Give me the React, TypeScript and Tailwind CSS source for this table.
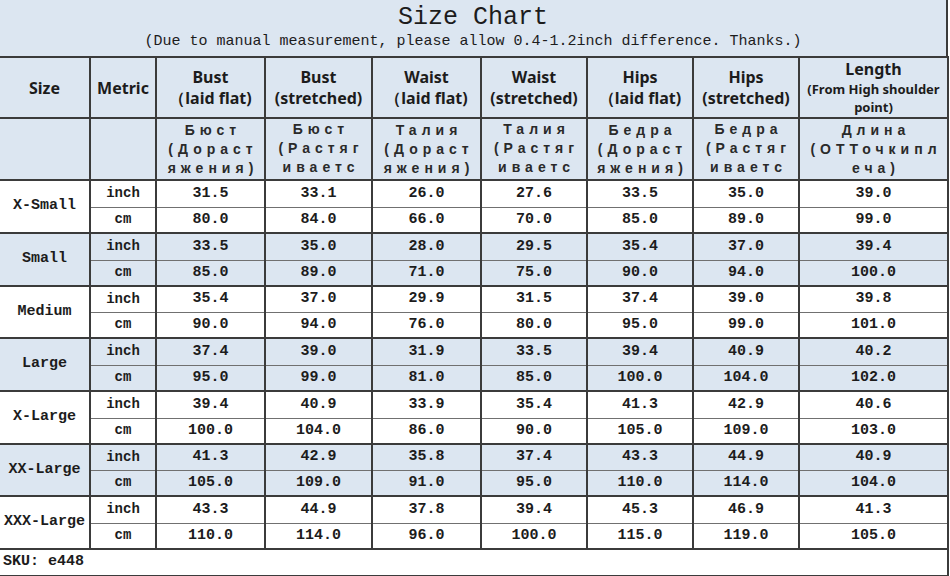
import React from 'react';

const mono = "font-['Liberation_Mono','DejaVu_Sans_Mono',monospace]";
const sans = "font-['Noto_Sans','Liberation_Sans',sans-serif]";

type Group = { size: string; inch: string[]; cm: string[] };

const groups: Group[] = [
  { size: 'X-Small', inch: ['31.5', '33.1', '26.0', '27.6', '33.5', '35.0', '39.0'], cm: ['80.0', '84.0', '66.0', '70.0', '85.0', '89.0', '99.0'] },
  { size: 'Small', inch: ['33.5', '35.0', '28.0', '29.5', '35.4', '37.0', '39.4'], cm: ['85.0', '89.0', '71.0', '75.0', '90.0', '94.0', '100.0'] },
  { size: 'Medium', inch: ['35.4', '37.0', '29.9', '31.5', '37.4', '39.0', '39.8'], cm: ['90.0', '94.0', '76.0', '80.0', '95.0', '99.0', '101.0'] },
  { size: 'Large', inch: ['37.4', '39.0', '31.9', '33.5', '39.4', '40.9', '40.2'], cm: ['95.0', '99.0', '81.0', '85.0', '100.0', '104.0', '102.0'] },
  { size: 'X-Large', inch: ['39.4', '40.9', '33.9', '35.4', '41.3', '42.9', '40.6'], cm: ['100.0', '104.0', '86.0', '90.0', '105.0', '109.0', '103.0'] },
  { size: 'XX-Large', inch: ['41.3', '42.9', '35.8', '37.4', '43.3', '44.9', '40.9'], cm: ['105.0', '109.0', '91.0', '95.0', '110.0', '114.0', '104.0'] },
  { size: 'XXX-Large', inch: ['43.3', '44.9', '37.8', '39.4', '45.3', '46.9', '41.3'], cm: ['110.0', '114.0', '96.0', '100.0', '115.0', '119.0', '105.0'] },
];

const headers: { top: string; sub: string; small?: boolean }[] = [
  { top: 'Bust', sub: '（laid flat)' },
  { top: 'Bust', sub: '(stretched)' },
  { top: 'Waist', sub: '（laid flat)' },
  { top: 'Waist', sub: '(stretched)' },
  { top: 'Hips', sub: '（laid flat)' },
  { top: 'Hips', sub: '(stretched)' },
  { top: 'Length', sub: '(From High shoulder point)', small: true },
];

// stretched cells are cut off after the third line in the source chart
const russian: { lines: string[]; top?: boolean }[] = [
  { lines: ['Бюст', '(Дораст', 'яжения)'] },
  { lines: ['Бюст', '(Растяг', 'иваетс'], top: true },
  { lines: ['Талия', '(Дораст', 'яжения)'] },
  { lines: ['Талия', '(Растяг', 'иваетс'], top: true },
  { lines: ['Бедра', '(Дораст', 'яжения)'] },
  { lines: ['Бедра', '(Растяг', 'иваетс'], top: true },
  { lines: ['Длина', '(ОТТочкипл', 'еча)'] },
];

const widths = [90, 66, 109, 107, 109, 106, 106, 106, 149];

export default function App() {
  return (
    <div className="w-[950px] h-[576px] bg-white overflow-hidden text-[#1c1c1c]">
      <div className="w-[948px]">
        {/* Title */}
        <div className="h-[56px] bg-[#dce6f1] border-r-2 border-[#3b3b3b] flex flex-col items-center pt-[3px]">
          <div className={`${mono} text-[25px] leading-[29px]`}>Size Chart</div>
          <div className={`${mono} text-[15px] leading-[20px]`}>
            (Due to manual measurement, please allow 0.4-1.2inch difference. Thanks.)
          </div>
        </div>

        <table className="table-fixed border-collapse w-[948px]">
          <colgroup>
            {widths.map((w, i) => (
              <col key={i} style={{ width: w }} />
            ))}
          </colgroup>
          <tbody>
            {/* English header */}
            <tr className="h-[61px] bg-[#dce6f1]">
              <td className={`${sans} border-y-2 border-r-2 border-[#3b3b3b] text-center font-bold text-[16px]`}>Size</td>
              <td className={`${sans} border-2 border-[#3b3b3b] text-center font-bold text-[16px]`}>Metric</td>
              {headers.map((h, i) => (
                <td key={i} className={`${sans} border-2 border-[#3b3b3b] text-center font-bold leading-[21px]`}>
                  <div className="text-[16px]">{h.top}</div>
                  <div className={h.small ? 'text-[13px] leading-[18px] px-1' : 'text-[16px]'}>{h.sub}</div>
                </td>
              ))}
            </tr>

            {/* Russian header */}
            <tr className="h-[62px] bg-[#dce6f1]">
              <td className="border-y-2 border-r-2 border-[#3b3b3b]"></td>
              <td className="border-2 border-[#3b3b3b]"></td>
              {russian.map((r, i) => (
                <td key={i} className="border-2 border-[#3b3b3b] p-0">
                  <div
                    className={
                      r.top
                        ? "h-[60px] overflow-hidden flex flex-col justify-start pt-[1px] items-center font-['Liberation_Sans',sans-serif] font-bold text-[#2a2a2a] text-[14px] leading-[19px] tracking-[5px] pl-[5px]"
                        : "h-[60px] overflow-hidden flex flex-col justify-center items-center font-['Liberation_Sans',sans-serif] font-bold text-[#2a2a2a] text-[14px] leading-[19px] tracking-[5px] pl-[5px]"
                    }
                  >
                    {r.lines.map((l, j) => (
                      <div key={j} className="whitespace-nowrap">{l}</div>
                    ))}
                  </div>
                </td>
              ))}
            </tr>

            {groups.map((g, gi) => {
              const bg = gi % 2 === 1 ? 'bg-[#dce6f1]' : 'bg-white';
              const h = gi % 3 === 2 ? 'h-[26px]' : 'h-[27px]';
              return (
                <React.Fragment key={g.size}>
                  <tr className={`${h} ${bg}`}>
                    <td rowSpan={2} className={`${mono} border-y-2 border-r-2 border-[#3b3b3b] text-center text-[15px] font-bold`}>
                      {g.size}
                    </td>
                    <td className={`${mono} border-t-2 border-x-2 border-b border-b-[#707070] border-[#3b3b3b] text-center text-[14px] font-bold`}>
                      inch
                    </td>
                    {g.inch.map((v, i) => (
                      <td key={i} className={`${mono} border-t-2 border-x-2 border-b border-b-[#707070] border-[#3b3b3b] text-center text-[15px] font-bold`}>
                        {v}
                      </td>
                    ))}
                  </tr>
                  <tr className={`h-[26px] ${bg}`}>
                    <td className={`${mono} border-b-2 border-x-2 border-[#3b3b3b] text-center text-[14px] font-bold`}>cm</td>
                    {g.cm.map((v, i) => (
                      <td key={i} className={`${mono} border-b-2 border-x-2 border-[#3b3b3b] text-center text-[15px] font-bold`}>
                        {v}
                      </td>
                    ))}
                  </tr>
                </React.Fragment>
              );
            })}

            <tr className="h-[27px] bg-white">
              <td colSpan={9} className={`${mono} border-y-2 border-r-2 border-[#3b3b3b] text-left pl-[3px] text-[15px] font-bold`}>
                SKU: e448
              </td>
            </tr>
          </tbody>
        </table>
      </div>
    </div>
  );
}
